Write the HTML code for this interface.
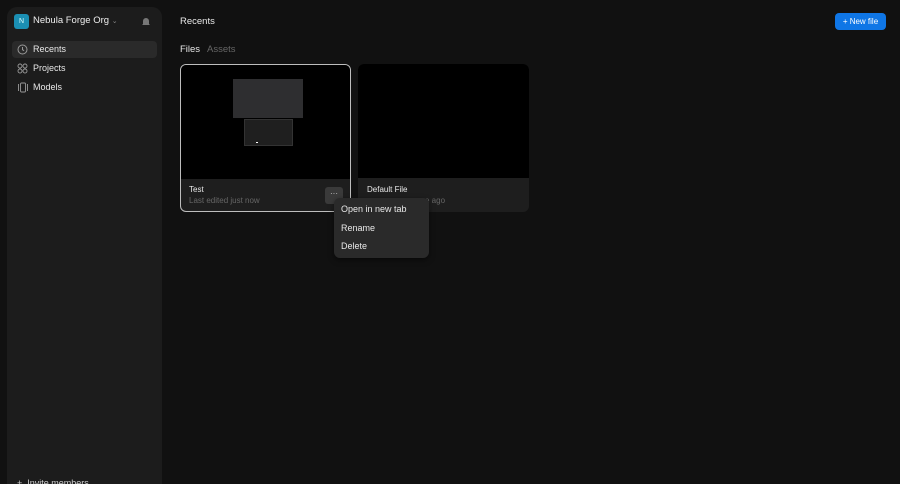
<!DOCTYPE html>
<html style="width:900px;height:484px;overflow:hidden"><head><style>
*{margin:0;padding:0;box-sizing:border-box}
body{width:900px;height:484px;background:#111111;font-family:"Liberation Sans",sans-serif;color:#e8e8e8;position:relative;overflow:hidden}
.abs{position:absolute}
.side{left:7px;top:7px;width:155px;height:490px;background:#1c1c1c;border-radius:10px}
.t{position:absolute;font-size:9px;white-space:nowrap}
</style></head><body>
<div class="abs side"></div>
<div class="abs" style="left:14px;top:14px;width:15px;height:15px;background:#1b8fb3;border-radius:3px;font-size:7px;color:#dff;text-align:center;line-height:15px">N</div>
<div class="t" style="left:33px;top:15px;font-size:9.5px;color:#eee">Nebula Forge Org <span style="color:#888;font-size:7px">⌄</span></div>
<svg class="abs" style="left:141px;top:16px" width="10" height="11" viewBox="0 0 10 11"><path d="M2 8V5a3 3 0 016 0v3l1 1H1z M4 9.5h2" fill="#777"/></svg>
<div class="abs" style="left:12px;top:41px;width:145px;height:17px;background:#2a2a2a;border-radius:4px"></div>
<svg class="abs" style="left:17px;top:44px" width="11" height="11" viewBox="0 0 11 11"><circle cx="5.5" cy="5.5" r="4.5" fill="none" stroke="#999"/><path d="M5.5 3v2.7l1.6 1" fill="none" stroke="#999"/></svg>
<div class="t" style="left:33px;top:44px">Recents</div>
<svg class="abs" style="left:17px;top:63px" width="11" height="11" viewBox="0 0 11 11" fill="none" stroke="#999" stroke-width=".9"><circle cx="3" cy="3" r="2"/><circle cx="8" cy="3" r="2"/><circle cx="3" cy="8" r="2"/><circle cx="8" cy="8" r="2"/></svg>
<div class="t" style="left:33px;top:63px">Projects</div>
<svg class="abs" style="left:17px;top:82px" width="12" height="11" viewBox="0 0 12 11" fill="none" stroke="#999" stroke-width=".9"><rect x="3.5" y="1" width="5" height="9" rx="1"/><path d="M1.5 2v7M10.5 2v7"/></svg>
<div class="t" style="left:33px;top:82px">Models</div>
<div class="t" style="left:17px;top:478px;color:#ccc">+ &nbsp;Invite members</div>

<div class="t" style="left:180px;top:16px;font-size:9.5px">Recents</div>
<div class="abs" style="left:835px;top:13px;width:51px;height:17px;background:#0f76e6;border-radius:4px;font-size:8px;color:#fff;line-height:17px;text-align:center">+ New file</div>
<div class="t" style="left:180px;top:44px;font-size:9.5px">Files</div>
<div class="t" style="left:207px;top:44px;font-size:9.5px;color:#666">Assets</div>

<div class="abs" style="left:180px;top:64px;width:171px;height:148px;background:#1e1e1e;border:1px solid #bdbdbd;border-radius:6px;overflow:hidden">
 <div style="height:114px;background:#000"></div>
</div>
<div class="abs" style="left:233px;top:79px;width:70px;height:39px;background:#2e2e30"></div>
<div class="abs" style="left:244px;top:119px;width:49px;height:27px;background:#1f1f1f;border:1px solid #333"></div>
<div class="abs" style="left:256px;top:142px;width:2px;height:1px;background:#fff"></div>
<div class="t" style="left:189px;top:185px;font-size:8px">Test</div>
<div class="t" style="left:189px;top:196px;font-size:8px;color:#666">Last edited just now</div>
<div class="abs" style="left:325px;top:187px;width:18px;height:17px;background:#3a3a3a;border-radius:3px;font-size:8px;color:#ccc;text-align:center;line-height:14px">···</div>

<div class="abs" style="left:358px;top:64px;width:171px;height:148px;background:#1e1e1e;border-radius:6px;overflow:hidden">
 <div style="height:114px;background:#000"></div>
</div>
<div class="t" style="left:367px;top:185px;font-size:8px">Default File</div>
<div class="t" style="left:425px;top:196px;font-size:8px;color:#666">e ago</div>

<div class="abs" style="left:334px;top:198px;width:95px;height:60px;background:#2a2a2a;border-radius:6px;box-shadow:0 2px 6px rgba(0,0,0,.5)"></div>
<div class="t" style="left:341px;top:204px">Open in new tab</div>
<div class="t" style="left:341px;top:223px">Rename</div>
<div class="t" style="left:341px;top:241px">Delete</div>
</body></html>
